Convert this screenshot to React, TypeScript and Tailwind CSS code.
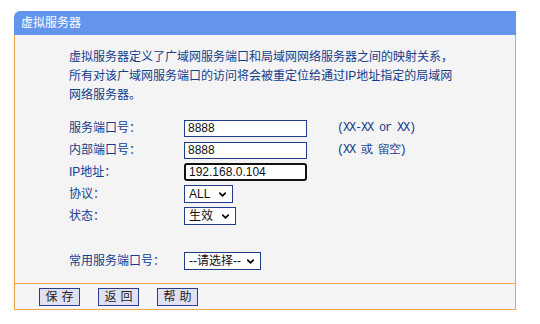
import { ChevronDown } from "lucide-react";

function Select({ value, width }: { value: string; width: string }) {
  return (
    <div
      className={`${width} h-[18px] border border-[#1f3c8a] bg-white flex items-center justify-between pl-[4px] pr-[4px] text-[12px] text-[#111]`}
    >
      <span>{value}</span>
      <ChevronDown className="w-[11px] h-[11px] text-black" strokeWidth={3.5} />
    </div>
  );
}

function Row({ label, children }: { label: string; children: React.ReactNode }) {
  return (
    <div className="h-[22px] flex items-center">
      <div className="w-[115px] shrink-0">{label}</div>
      {children}
    </div>
  );
}

export default function App() {
  return (
    <div className="w-[540px] h-[324px] bg-white pt-[11px] pl-[14px] font-[Liberation_Sans,Noto_Sans_CJK_SC,sans-serif]">
      <div className="w-[502px]">
        {/* title bar */}
        <div className="h-[24px] bg-[#6495ed] rounded-tl-[6px] pl-[7px] flex items-center text-white text-[12px]">
          虚拟服务器
        </div>

        {/* body */}
        <div className="h-[248px] bg-[#f4f4f4] border-x border-[#f2a445] pl-[54px] pt-[13px] text-[12px] text-[#133c8b]">
          <p className="leading-[19px]">
            虚拟服务器定义了广域网服务端口和局域网网络服务器之间的映射关系，
            <br />
            所有对该广域网服务端口的访问将会被重定位给通过IP地址指定的局域网
            <br />
            网络服务器。
          </p>

          <div className="mt-[12px]">
            <Row label="服务端口号：">
              <div className="w-[123px] h-[17px] border border-[#1f3c8a] bg-white pl-[3px] text-[12px] leading-[15px] text-[#111]">8888</div>
              <span className="ml-[30px] text-[12px] tracking-[-1.2px] font-mono">(XX-XX or XX)</span>
            </Row>
            <Row label="内部端口号：">
              <div className="w-[123px] h-[17px] border border-[#1f3c8a] bg-white pl-[3px] text-[12px] leading-[15px] text-[#111]">8888</div>
              <span className="ml-[30px] text-[12px] tracking-[-1.2px] font-mono">(XX 或 留空)</span>
            </Row>
            <Row label="IP地址：">
              <div className="w-[123px] h-[18px] border-2 border-[#111] rounded-[3px] bg-white pl-[3px] text-[12px] leading-[14px] text-[#111]">192.168.0.104</div>
            </Row>
            <Row label="协议：">
              <Select value="ALL" width="w-[49px]" />
            </Row>
            <Row label="状态：">
              <Select value="生效" width="w-[52px]" />
            </Row>
            <div className="h-[23px]" />
            <Row label="常用服务端口号：">
              <Select value="--请选择--" width="w-[77px]" />
            </Row>
          </div>
        </div>

        {/* footer */}
        <div className="h-[27px] bg-[#f5f5f7] border border-[#f2a445] pl-[24px] flex items-center gap-[18px]">
          {["保存", "返回", "帮助"].map((b) => (
            <button
              key={b}
              className="w-[41px] h-[18px] border border-[#2a3d8f] bg-[#dfe1f2] text-[12px] text-[#222] tracking-[4px] pl-[4px] flex items-center justify-center"
            >
              {b}
            </button>
          ))}
        </div>
      </div>
    </div>
  );
}
